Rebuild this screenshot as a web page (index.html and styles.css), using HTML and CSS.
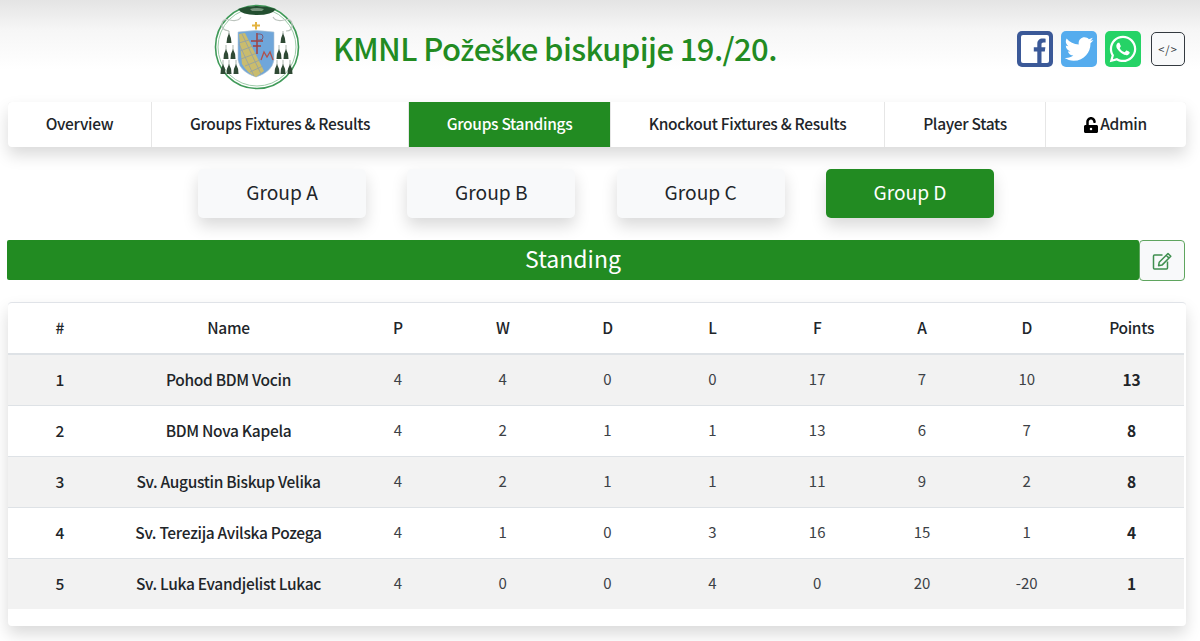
FILE: index.html
```html
<!DOCTYPE html>
<html lang="hr">
<head>
<meta charset="utf-8">
<title>KMNL Požeške biskupije 19./20.</title>
<link rel="stylesheet" href="styles.css">
</head>
<body>
<header class="header">
  <svg class="crest" viewBox="0 0 86 86" aria-hidden="true">
    <circle cx="43" cy="43" r="41.500" fill="#fff" stroke="#3f9a58" stroke-width="1.600"/>
    <circle cx="43" cy="43" r="39" fill="none" stroke="#9ccba8" stroke-width="1"/>
    <path d="M24 5 Q43 -1 62 5 Q58 11 43 11 Q28 11 24 5Z" fill="#234f30"/>
    <path d="M36 5 Q43 3 50 5 L48 7 H38Z" fill="#78937d"/>
    <path d="M8 20 Q8 14 16 16 Q24 18 27 13 M59 13 Q62 18 70 16 Q78 14 78 20 Q79 27 72 27 M8 20 Q7 26 15 27" fill="none" stroke="#bcc4be" stroke-width="1.200"/>
    <path d="M41 18h2v2.500h3v2h-3v3h-2v-3h-3v-2h3z" fill="#e3b341"/>
    <path d="M24 28 Q42 25 60 28 V56 Q58 68 42 73 Q26 68 24 56Z" fill="#6fa6da" stroke="#b6c6d4" stroke-width=".6"/>
    <path d="M25 30 L31 29 L50 67 L42 73 Q33 69 28 60 Z" fill="#c9bc6e"/>
    <path d="M25 39 L35 36 M26 47 L39 42 M27 55 L43 49 M31 62 L46 56 M36 68 L49 62 M28 30 L47 70 M25 40 L40 72" stroke="#8f9fa8" stroke-width=".8" fill="none"/>
    <path d="M43 29 V50 M37 37 H49 M39 42 H47" stroke="#a2423f" stroke-width="1.500" fill="none"/>
    <path d="M43 30 h3 a3 3 0 0 1 0 6 h-3" stroke="#7d5a78" stroke-width="1" fill="none"/>
    <path d="M47 56 L50 48 L53 53 L56 48 L59 56" stroke="#b0504a" stroke-width="1.300" fill="none"/>
    <path d="M15 27 V30 M12 41 V46 M19 41 V46 M9 56 V61 M15 56 V61 M22 56 V61 M69 27 V30 M65 41 V46 M72 41 V46 M63 56 V61 M69 56 V61 M76 56 V61" stroke="#8a9a8c" stroke-width=".7"/>
    <g fill="#2f4a35">
      <path d="M15 29 q2.500 5 2.500 10 h-5 q0-5 2.500-10z"/>
      <path d="M12 45 q2.500 4 2.500 10 h-5 q0-6 2.500-10z"/><path d="M19 45 q2.500 4 2.500 10 h-5 q0-6 2.500-10z"/>
      <path d="M9 60 q2.500 4 2.500 10 h-5 q0-6 2.500-10z"/><path d="M15 60 q2.500 4 2.500 10 h-5 q0-6 2.500-10z"/><path d="M22 60 q2.500 4 2.500 10 h-5 q0-6 2.500-10z"/>
      <path d="M69 29 q2.500 5 2.500 10 h-5 q0-5 2.500-10z"/>
      <path d="M65 45 q2.500 4 2.500 10 h-5 q0-6 2.500-10z"/><path d="M72 45 q2.500 4 2.500 10 h-5 q0-6 2.500-10z"/>
      <path d="M63 60 q2.500 4 2.500 10 h-5 q0-6 2.500-10z"/><path d="M69 60 q2.500 4 2.500 10 h-5 q0-6 2.500-10z"/><path d="M76 60 q2.500 4 2.500 10 h-5 q0-6 2.500-10z"/>
    </g>
  </svg>
  <h1 class="title">KMNL Po<span class="alt">ž</span>e<span class="alt">š</span>ke biskupije 19./20.</h1>
  <div class="social">
    <span class="social-icon fb">
      <svg viewBox="0 0 36 36" aria-hidden="true"><rect x="4" y="4" width="28" height="28" rx="2" fill="#fff"/><path d="M24.500 32V20.500h3.300l.6-4.300h-3.900v-2.600c0-1.300.4-2.100 2.100-2.100h2V7.700c-.9-.1-2-.2-3-.2-3.200 0-5.300 1.900-5.300 5.500v3.200h-3.500v4.300h3.500V32z" fill="#3b5998"/></svg>
    </span>
    <span class="social-icon tw">
      <svg viewBox="-48 -64 608 640" aria-hidden="true"><path fill="#fff" d="M459.37 151.716c.325 4.548.325 9.097.325 13.645 0 138.72-105.583 298.558-298.558 298.558-59.452 0-114.68-17.219-161.137-47.106 8.447.974 16.568 1.299 25.34 1.299 49.055 0 94.213-16.568 130.274-44.832-46.132-.975-84.792-31.188-98.112-72.772 6.498.974 12.995 1.624 19.818 1.624 9.421 0 18.843-1.3 27.614-3.573-48.081-9.747-84.143-51.98-84.143-102.985v-1.299c13.969 7.797 30.214 12.67 47.431 13.319-28.264-18.843-46.781-51.005-46.781-87.391 0-19.492 5.197-37.36 14.294-52.954 51.655 63.675 129.3 105.258 216.365 109.807-1.624-7.797-2.599-15.918-2.599-24.04 0-57.828 46.782-104.934 104.934-104.934 30.213 0 57.502 12.67 76.67 33.137 23.715-4.548 46.456-13.32 66.599-25.34-7.798 24.366-24.366 44.833-46.132 57.827 21.117-2.273 41.584-8.122 60.426-16.243-14.292 20.791-32.161 39.308-52.628 54.253z"/></svg>
    </span>
    <span class="social-icon wa">
      <svg viewBox="-64 -48 576 608" aria-hidden="true"><path fill="#fff" d="M380.9 97.1C339 55.1 283.2 32 223.9 32c-122.4 0-222 99.6-222 222 0 39.1 10.2 77.3 29.6 111L0 480l117.7-30.9c32.4 17.7 68.9 27 106.1 27h.1c122.3 0 224.1-99.6 224.1-222 0-59.3-25.2-115-67.1-157zm-157 341.6c-33.2 0-65.7-8.9-94-25.7l-6.7-4-69.8 18.3L72 359.2l-4.400-7c-18.500-29.400-28.200-63.300-28.200-98.200 0-101.700 82.800-184.500 184.600-184.500 49.300 0 95.600 19.200 130.400 54.100 34.800 34.900 56.200 81.200 56.100 130.500 0 101.800-84.900 184.600-186.600 184.600zm101.200-138.200c-5.500-2.800-32.800-16.200-37.900-18-5.100-1.900-8.800-2.800-12.500 2.800-3.700 5.600-14.300 18-17.600 21.800-3.200 3.700-6.500 4.200-12 1.400-32.600-16.300-54-29.100-75.500-66-5.700-9.800 5.700-9.100 16.300-30.300 1.800-3.700.9-6.900-.5-9.700-1.400-2.800-12.500-30.100-17.100-41.200-4.500-10.800-9.100-9.300-12.500-9.500-3.200-.2-6.900-.2-10.600-.2-3.700 0-9.700 1.400-14.800 6.900-5.100 5.600-19.400 19-19.400 46.300 0 27.300 19.900 53.700 22.600 57.400 2.800 3.700 39.100 59.700 94.800 83.800 35.200 15.200 49 16.500 66.600 13.900 10.700-1.600 32.800-13.400 37.400-26.400 4.600-13 4.600-24.100 3.200-26.400-1.300-2.500-5-3.900-10.500-6.600z"/></svg>
    </span>
    <span class="code-btn">&lt;/&gt;</span>
  </div>
</header>

<nav class="nav">
  <a class="nav-item nav-overview">Overview</a>
  <a class="nav-item nav-fixtures">Groups Fixtures &amp; Results</a>
  <a class="nav-item nav-standings active">Groups Standings</a>
  <a class="nav-item nav-knockout">Knockout Fixtures &amp; Results</a>
  <a class="nav-item nav-stats">Player Stats</a>
  <a class="nav-item nav-admin">
    <svg class="lock" viewBox="0 0 448 512" aria-hidden="true"><path d="M400 256H152V152.900c0-39.600 31.700-72.500 71.300-72.900 40-.4 72.700 32.100 72.700 72v16c0 13.300 10.700 24 24 24h32c13.300 0 24-10.700 24-24v-16C376 68 307.500-.3 223.500 0 139.500.3 72 69.500 72 153.500V256H48c-26.500 0-48 21.500-48 48v160c0 26.500 21.500 48 48 48h352c26.500 0 48-21.500 48-48V304c0-26.500-21.500-48-48-48zM224 424a40 40 0 1 1 0-80 40 40 0 0 1 0 80z"/></svg>Admin
  </a>
</nav>

<div class="groups">
  <a class="group-btn">Group A</a>
  <a class="group-btn">Group B</a>
  <a class="group-btn">Group C</a>
  <a class="group-btn active">Group D</a>
</div>

<div class="standing-bar">
  <h2 class="standing-title">Standing</h2>
  <span class="edit-btn">
    <svg viewBox="0 0 20 18" aria-hidden="true"><path class="edit-box" d="M10.500 3H2.500a1 1 0 0 0-1 1v12a1 1 0 0 0 1 1h12a1 1 0 0 0 1-1V9.500"/><path class="edit-pen" d="M16 1.500l2.800 2.800L10 13.100l-3.400.6.6-3.400zM14.200 3.300l2.800 2.800"/></svg>
  </span>
</div>

<section class="card">
  <table class="table">
    <colgroup>
      <col class="col-rank"><col class="col-name"><col span="8" class="col-num">
    </colgroup>
    <thead>
      <tr><th>#</th><th>Name</th><th>P</th><th>W</th><th>D</th><th>L</th><th>F</th><th>A</th><th>D</th><th>Points</th></tr>
    </thead>
    <tbody>
      <tr><td class="strong">1</td><td class="strong">Pohod BDM Vocin</td><td>4</td><td>4</td><td>0</td><td>0</td><td>17</td><td>7</td><td>10</td><td class="bold">13</td></tr>
      <tr><td class="strong">2</td><td class="strong">BDM Nova Kapela</td><td>4</td><td>2</td><td>1</td><td>1</td><td>13</td><td>6</td><td>7</td><td class="bold">8</td></tr>
      <tr><td class="strong">3</td><td class="strong">Sv. Augustin Biskup Velika</td><td>4</td><td>2</td><td>1</td><td>1</td><td>11</td><td>9</td><td>2</td><td class="bold">8</td></tr>
      <tr><td class="strong">4</td><td class="strong">Sv. Terezija Avilska Pozega</td><td>4</td><td>1</td><td>0</td><td>3</td><td>16</td><td>15</td><td>1</td><td class="bold">4</td></tr>
      <tr><td class="strong">5</td><td class="strong">Sv. Luka Evandjelist Lukac</td><td>4</td><td>0</td><td>0</td><td>4</td><td>0</td><td>20</td><td>-20</td><td class="bold">1</td></tr>
    </tbody>
  </table>
</section>
</body>
</html>
```
FILE: styles.css
```css
* { box-sizing: border-box; }

html, body { margin: 0; padding: 0; }

body {
  height: 641px;
  overflow: hidden;
  padding: 0 14px 0 8px;
  font-family: "Noto Sans CJK SC", "Noto Sans", sans-serif;
  color: #212529;
  background: linear-gradient(to bottom, #e4e4e4 0, #f6f6f6 30px, #ffffff 70px);
}

.header {
  height: 102px;
  display: flex;
  align-items: flex-start;
  padding-top: 4px;
}

.crest {
  width: 86px;
  height: 86px;
  margin-left: 206px;
  flex: none;
}

.title {
  margin: 23px 0 0 33px;
  font-size: 31px;
  line-height: 42px;
  font-weight: 500;
  letter-spacing: -.6px;
  color: #228b22;
  white-space: nowrap;
}

.alt {
  font-family: "Noto Sans", sans-serif;
  font-size: 29px;
  font-weight: 500;
}

.social {
  margin-left: auto;
  margin-top: 27px;
  margin-right: 1px;
  display: flex;
  align-items: center;
  gap: 8px;
}

.social-icon {
  width: 36px;
  height: 36px;
  border-radius: 5px;
  display: block;
  overflow: hidden;
  flex: none;
}

.social-icon svg { display: block; width: 100%; height: 100%; }

.fb { background: #3b5998; }
.tw { background: #55acee; }
.wa { background: #25d366; }

.code-btn {
  width: 34px;
  height: 34px;
  margin-left: 2px;
  border: 1px solid #343a40;
  border-radius: 5px;
  background: #f8f9fa;
  display: flex;
  align-items: center;
  justify-content: center;
  font-size: 11px;
  line-height: 1;
  letter-spacing: 1px;
  color: #343a40;
}

.nav {
  display: flex;
  height: 45px;
  gap: 1px;
  border-radius: 4px;
  background: #e6e6e6;
  box-shadow: 0 8px 16px rgba(0, 0, 0, .15);
}

.nav-item {
  display: flex;
  align-items: center;
  justify-content: center;
  padding-bottom: 3px;
  background: #fff;
  font-size: 15.500px;
  line-height: 24px;
  font-weight: 500;
  letter-spacing: -.3px;
  color: #212529;
  white-space: nowrap;
}

.nav-overview { width: 143px; border-radius: 4px 0 0 4px; }
.nav-fixtures { width: 256px; }
.nav-standings { width: 201px; }
.nav-knockout { width: 273px; }
.nav-stats { width: 160px; }
.nav-admin { flex: 1; border-radius: 0 4px 4px 0; }

.nav-item.active { background: #228b22; color: #fff; }

.lock { width: 14px; height: 16px; margin: 3px 2px 0 -1px; fill: #000; }

.groups {
  display: flex;
  justify-content: center;
  gap: 41.330px;
  margin-top: 22px;
  padding-right: 2px;
}

.group-btn {
  width: 168px;
  height: 49px;
  display: flex;
  align-items: center;
  justify-content: center;
  padding-bottom: 3px;
  border-radius: 5px;
  background: #f8f9fa;
  font-size: 19.200px;
  line-height: 30px;
  color: #212529;
  box-shadow: 0 8px 16px rgba(0, 0, 0, .15);
}

.group-btn.active { background: #228b22; color: #fff; }

.standing-bar {
  display: flex;
  height: 41px;
  margin-top: 22px;
  margin-left: -1px;
}

.standing-title {
  flex: 1;
  margin: 0;
  padding-bottom: 3px;
  height: 40px;
  background: #228b22;
  border-radius: 2px;
  color: #fff;
  font-size: 23px;
  line-height: 37px;
  font-weight: 400;
  text-align: center;
}

.edit-btn {
  width: 46px;
  height: 41px;
  margin-right: 1px;
  border: 1px solid #5fa55f;
  border-radius: 4px;
  background: #f8f9fa;
  display: flex;
  align-items: center;
  justify-content: center;
}

.edit-btn svg { width: 20px; height: 18px; fill: none; stroke: #3f8f4f; stroke-width: 1.500; stroke-linejoin: round; }

.card {
  margin-top: 21px;
  height: 324px;
  width: 1178px;
  padding: 0 2px 0 0;
  border-radius: 4px;
  background: #fff;
  border-top: 1px solid #e0e3e8;
  box-shadow: 0 8px 16px rgba(0, 0, 0, .15);
}

.table {
  width: 100%;
  table-layout: fixed;
  border-collapse: collapse;
  font-size: 15px;
  line-height: 22px;
  text-align: center;
}

.col-rank { width: 103.500px; }
.col-name { width: 234px; }

.table th {
  height: 51px;
  padding: 0 0 2px;
  font-weight: 500;
  font-size: 15.500px;
  letter-spacing: -.3px;
  color: #212529;
  border-bottom: 2px solid #dee2e6;
}

.table td {
  height: 51px;
  padding: 0 0 2px;
  font-weight: 400;
  color: #3c4146;
  border-bottom: 1px solid #dee2e6;
}

.table tbody tr:last-child td { border-bottom: 0; }

.table tbody tr:nth-child(odd) { background: #f2f2f2; }

.table td.strong { font-size: 15.500px; font-weight: 500; letter-spacing: -.3px; color: #212529; }
.table td.bold { font-size: 15.500px; font-weight: 700; color: #212529; }
```
